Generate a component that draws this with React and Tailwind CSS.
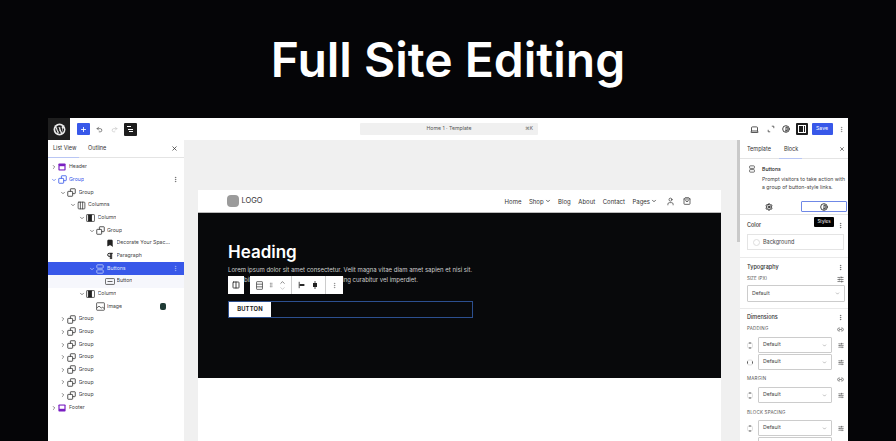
import React from 'react';
import { ChevronRight, ChevronDown, ChevronUp, MoreVertical, X, Plus, Undo2, Redo2, Laptop, Contrast, Settings, User, ShoppingBag, SlidersHorizontal, Link2, GripVertical, Bookmark, Pilcrow, Columns2, Columns3 } from 'lucide-react';

const GroupIcon = ({ className = 'text-[#333]' }) => (
  <svg viewBox="0 0 12 12" className={`w-[9px] h-[9px] shrink-0 ${className}`} fill="none" stroke="currentColor" strokeWidth="1.1">
    <rect x="4.5" y="1" width="6.5" height="6.5" rx="0.6" />
    <rect x="1" y="4.5" width="6.5" height="6.5" rx="0.6" fill="white" />
  </svg>
);

const TemplateIcon = ({ flip }) => (
  <svg viewBox="0 0 10 10" className="w-[8px] h-[8px] shrink-0">
    <rect x="0.5" y="0.5" width="9" height="9" rx="1" fill="#7a1fc2" />
    <rect x="2" y={flip ? 2 : 4} width="6" height="4" fill="#fff" />
  </svg>
);

const ColumnIcon = () => (
  <svg viewBox="0 0 12 10" className="w-[9px] h-[8px] shrink-0 text-[#222]" fill="none" stroke="currentColor" strokeWidth="1">
    <rect x="0.5" y="0.5" width="11" height="9" rx="1" />
    <rect x="3" y="1" width="4.5" height="8" fill="currentColor" />
  </svg>
);

const ImageRowIcon = () => (
  <svg viewBox="0 0 12 12" className="w-[9px] h-[9px] shrink-0 text-[#333]" fill="none" stroke="currentColor" strokeWidth="1">
    <rect x="0.8" y="1" width="10.4" height="10" rx="0.8" />
    <path d="M1 8l3-2.5 3 2.5 1.5-1 2.5 1.5" />
  </svg>
);

const ButtonsIcon = ({ className = 'text-[#a9bbf5]', size = 'w-[8px] h-[10px]' }) => (
  <svg viewBox="0 0 8 10" className={`${size} shrink-0 ${className}`} fill="none" stroke="currentColor" strokeWidth="1">
    <rect x="0.8" y="0.8" width="6.4" height="3.4" rx="0.8" />
    <rect x="0.8" y="5.8" width="6.4" height="3.4" rx="0.8" />
  </svg>
);

const ButtonIcon = () => (
  <svg viewBox="0 0 12 8" className="w-[10px] h-[7px] shrink-0 text-[#333]" fill="none" stroke="currentColor" strokeWidth="0.9">
    <rect x="0.5" y="0.5" width="11" height="7" rx="1" />
    <path d="M3 4h6" />
  </svg>
);

const listRows = [
  { label: 'Header', depth: 0, arrow: 'right', icon: <TemplateIcon /> },
  { label: 'Group', depth: 0, arrow: 'down', icon: <GroupIcon className="text-[#3858e9]" />, blue: true, menu: true },
  { label: 'Group', depth: 1, arrow: 'down', icon: <GroupIcon /> },
  { label: 'Columns', depth: 2, arrow: 'down', icon: <Columns3 className="w-[9px] h-[9px] shrink-0 text-[#333]" strokeWidth={2} /> },
  { label: 'Column', depth: 3, arrow: 'down', icon: <ColumnIcon /> },
  { label: 'Group', depth: 4, arrow: 'down', icon: <GroupIcon /> },
  { label: 'Decorate Your Spac...', depth: 5, icon: <Bookmark className="w-[8px] h-[8px] shrink-0 text-[#222] fill-[#222]" /> },
  { label: 'Paragraph', depth: 5, icon: <Pilcrow className="w-[8px] h-[8px] shrink-0 text-[#222]" strokeWidth={3} /> },
  { label: 'Buttons', depth: 4, arrow: 'down', icon: <ButtonsIcon />, selected: true, menu: true },
  { label: 'Button', depth: 5, icon: <ButtonIcon />, soft: true },
  { label: 'Column', depth: 3, arrow: 'down', icon: <ColumnIcon /> },
  { label: 'Image', depth: 4, icon: <ImageRowIcon />, thumb: true },
  { label: 'Group', depth: 1, arrow: 'right', icon: <GroupIcon /> },
  { label: 'Group', depth: 1, arrow: 'right', icon: <GroupIcon /> },
  { label: 'Group', depth: 1, arrow: 'right', icon: <GroupIcon /> },
  { label: 'Group', depth: 1, arrow: 'right', icon: <GroupIcon /> },
  { label: 'Group', depth: 1, arrow: 'right', icon: <GroupIcon /> },
  { label: 'Group', depth: 1, arrow: 'right', icon: <GroupIcon /> },
  { label: 'Group', depth: 1, arrow: 'right', icon: <GroupIcon /> },
  { label: 'Footer', depth: 0, arrow: 'right', icon: <TemplateIcon flip /> },
];

const ListRow = ({ row }) => {
  const Arrow = row.arrow === 'down' ? ChevronDown : ChevronRight;
  let rowClass = 'text-[#444]';
  if (row.selected) rowClass = 'bg-[#3858e9] text-[#dfe5fc]';
  else if (row.soft) rowClass = 'bg-[#f6f7fc] text-[#444]';
  else if (row.blue) rowClass = 'text-[#3858e9]';

  return (
    <div className={`h-[12.67px] flex items-center pr-[5px] text-[5.2px] ${rowClass}`} style={{ paddingLeft: 2.5 + row.depth * 9.5 }}>
      <span className="w-[6px] mr-[1px] shrink-0 flex justify-center">
        {row.arrow && <Arrow className="w-[6px] h-[6px]" strokeWidth={2.5} />}
      </span>
      <span className="w-[9px] flex justify-center shrink-0">{row.icon}</span>
      <span className="ml-[2.5px] truncate">{row.label}</span>
      {row.thumb && <span className="ml-auto mr-[13px] w-[6px] h-[7px] rounded-[2px] bg-[#1f3a35]" />}
      {row.menu && <MoreVertical className={`ml-auto w-[7px] h-[7px] ${row.selected ? 'text-[#a9bbf5]' : 'text-[#555]'}`} />}
    </div>
  );
};

const TopBar = () => (
  <div className="h-[22px] bg-white flex items-center shrink-0">
    <div className="w-[22px] h-[22px] bg-[#1e1e1e] flex items-center justify-center shrink-0">
      <svg viewBox="0 0 24 24" className="w-[13px] h-[13px]">
        <circle cx="12" cy="12" r="11" fill="#e8e8e8" />
        <path d="M4.2 12c0 3.1 1.8 5.8 4.4 7L4.9 8.8A7.8 7.8 0 0 0 4.2 12Zm13.1-.4c0-1-.4-1.6-.7-2.2-.4-.7-.8-1.2-.8-1.9 0-.7.6-1.4 1.3-1.4h.1A7.8 7.8 0 0 0 5.4 7.8h.5c.8 0 2.1-.1 2.1-.1.4 0 .5.6 0 .7l-.9.1 2.9 8.7 1.8-5.3-1.3-3.4-.8-.1c-.4 0-.4-.7 0-.7 0 0 1.3.1 2.1.1s2.1-.1 2.1-.1c.4 0 .5.6 0 .7l-.9.1 2.9 8.6.8-2.6c.3-1.1.6-1.9.6-2.6Zm-5.1 1.1-2.4 7a7.8 7.8 0 0 0 4.8-.1l-.1-.1-2.3-6.8Zm6.9-4.6.1.8c0 .8-.1 1.7-.6 2.8l-2.4 6.9a7.8 7.8 0 0 0 2.9-10.5Z" fill="#1e1e1e" />
      </svg>
    </div>
    <div className="ml-[7px] w-[12.5px] h-[12.5px] bg-[#3858e9] rounded-[1px] flex items-center justify-center">
      <Plus className="w-[7px] h-[7px] text-white" strokeWidth={3} />
    </div>
    <Undo2 className="ml-[6px] w-[7px] h-[7px] text-[#333]" strokeWidth={2} />
    <Redo2 className="ml-[8px] w-[7px] h-[7px] text-[#bbb]" strokeWidth={2} />
    <div className="ml-[6.5px] w-[13px] h-[13px] bg-[#1e1e1e] rounded-[1px] flex flex-col justify-center gap-[1.5px] pl-[3px]">
      <span className="block w-[4px] h-[1px] bg-white" />
      <span className="block w-[5px] h-[1px] bg-white ml-[1px]" />
      <span className="block w-[4px] h-[1px] bg-white ml-[2px]" />
    </div>
    <div className="ml-[223px] w-[178px] h-[12px] bg-[#f0f0f0] rounded-[1px] relative flex items-center justify-center text-[5.2px] text-[#555]">
      <span>Home 1 · Template</span>
      <span className="absolute right-[5px] text-[4.8px]">⌘K</span>
    </div>
    <Laptop className="ml-[212px] w-[9px] h-[9px] text-[#222]" strokeWidth={2} />
    <svg viewBox="0 0 10 10" className="ml-[7.5px] w-[8px] h-[8px] text-[#444]" fill="none" stroke="currentColor" strokeWidth="1">
      <path d="M6 1.5h2.5V4M4 8.5H1.5V6" />
    </svg>
    <Contrast className="ml-[7px] w-[8px] h-[8px] text-[#222]" strokeWidth={2.5} />
    <div className="ml-[6px] w-[12px] h-[12px] bg-[#1e1e1e] rounded-[1px] flex items-center justify-center">
      <span className="block w-[8px] h-[8px] border border-white relative">
        <span className="absolute right-[1px] top-0 bottom-0 w-[1px] bg-white" />
      </span>
    </div>
    <div className="ml-[4px] w-[21px] h-[12px] bg-[#3858e9] rounded-[1px] flex items-center justify-center text-[5.2px] text-white">Save</div>
    <MoreVertical className="ml-[5.5px] w-[7px] h-[7px] text-[#777]" />
  </div>
);

const LeftPanel = () => (
  <aside className="w-[136px] shrink-0 bg-white flex flex-col">
    <div className="h-[18px] flex items-center px-[5px] text-[5.5px] text-[#333] border-b border-[#e4e4e4] shrink-0 relative">
      <span>List View</span>
      <span className="ml-[11.5px]">Outline</span>
      <X className="ml-auto w-[7px] h-[7px] text-[#333] mr-[1px]" strokeWidth={2.5} />
      <span className="absolute left-0 bottom-[-1px] w-[31px] h-[1px] bg-[#b9c6f4]" />
    </div>
    <div className="pt-[3px]">
      {listRows.map((row, i) => <ListRow key={i} row={row} />)}
    </div>
  </aside>
);

const navItems = [
  { label: 'Home' },
  { label: 'Shop', arrow: true },
  { label: 'Blog' },
  { label: 'About' },
  { label: 'Contact' },
  { label: 'Pages', arrow: true },
];

const BlockToolbar = () => (
  <div className="absolute left-[29.5px] top-[63px] flex h-[18px] text-[#333]">
    <div className="w-[16.5px] bg-white flex items-center justify-center">
      <Columns2 className="w-[8px] h-[8px] text-[#222]" strokeWidth={2.5} />
    </div>
    <div className="ml-[6px] w-[42px] bg-white flex items-center justify-around px-[3px] border-r border-[#ccc]">
      <svg viewBox="0 0 8 10" className="w-[7px] h-[9px] shrink-0" fill="none" stroke="currentColor" strokeWidth="0.8">
        <rect x="0.6" y="0.6" width="6.8" height="8.8" rx="0.6" />
        <path d="M0.6 3.5h6.8M0.6 6.5h6.8" />
      </svg>
      <GripVertical className="w-[6px] h-[6px] text-[#888]" />
      <span className="flex flex-col">
        <ChevronUp className="w-[7px] h-[7px] -mb-[1px]" />
        <ChevronDown className="w-[7px] h-[7px] text-[#aaa]" />
      </span>
    </div>
    <div className="w-[34px] bg-white flex items-center justify-around px-[3px] border-r border-[#ccc]">
      <svg viewBox="0 0 10 10" className="w-[8px] h-[8px]">
        <path d="M1.5 1v8" stroke="#222" strokeWidth="1" />
        <rect x="2" y="3.8" width="6" height="2.4" fill="#222" />
      </svg>
      <svg viewBox="0 0 10 10" className="w-[8px] h-[8px]">
        <path d="M5 0v10" stroke="#222" strokeWidth="1" />
        <rect x="2.5" y="2.5" width="5" height="5" fill="#222" />
      </svg>
    </div>
    <div className="w-[17px] bg-white flex items-center justify-center">
      <MoreVertical className="w-[7px] h-[7px] text-[#777]" />
    </div>
  </div>
);

const Canvas = () => (
  <main className="relative flex-1 min-w-0 bg-[#f0f0f0] pt-[50px] pl-[14px] pr-[19px] overflow-hidden">
    <div className="bg-white h-[400px]">
      <div className="h-[23px] flex items-center pl-[29px] pr-[30px] text-[#333] border-b border-[#bbb]">
        <span className="w-[11.5px] h-[11.5px] rounded-[4px] bg-[#9b9b9b]" />
        <span className="ml-[3px] text-[7.5px]">LOGO</span>
        <nav className="ml-auto flex items-center gap-[7.5px] text-[6px]">
          {navItems.map(item => (
            <span key={item.label} className="flex items-center gap-[1px]">
              {item.label}
              {item.arrow && <ChevronDown className="w-[6px] h-[6px]" strokeWidth={3} />}
            </span>
          ))}
        </nav>
        <User className="ml-[8.5px] w-[9px] h-[9px]" strokeWidth={1.8} />
        <ShoppingBag className="ml-[8.5px] w-[8px] h-[8px]" strokeWidth={2.2} />
      </div>
      <section className="relative h-[165px] bg-[#08090b] pl-[30px] pt-[29px] text-white">
        <h2 className="text-[17px] leading-[20px] font-semibold">Heading</h2>
        <p className="mt-[3px] w-[246px] text-[6px] leading-[10px] text-[#cfcfcf]">
          Lorem ipsum dolor sit amet consectetur. Velit magna vitae diam amet sapien et nisi sit. Nulla bibendum tellus sit amet ut adipiscing curabitur vel imperdiet.
        </p>
        <BlockToolbar />
        <div className="mt-[16px] w-[245px] h-[17px] border border-[#2c4f8f] flex">
          <span className="w-[42px] bg-white text-[#222] text-[5.8px] font-bold flex items-center justify-center tracking-[0.2px]">BUTTON</span>
        </div>
      </section>
    </div>
    <div className="absolute right-0 top-0 w-[3px] h-[102px] bg-[#c9c9c9]" />
  </main>
);

const SectionHead = ({ title }) => (
  <div className="h-[8px] flex items-center justify-between text-[5.5px] font-medium text-[#333]">
    <span>{title}</span>
    <MoreVertical className="w-[7px] h-[7px] text-[#555]" />
  </div>
);

const SelectBox = ({ tall }) => (
  <div className={`w-full ${tall ? 'h-[17px]' : 'h-[16px]'} border border-[#ccc] rounded-[1px] flex items-center justify-between pl-[4px] pr-[4px] text-[5.2px] text-[#444]`}>
    <span>Default</span>
    <ChevronDown className="w-[5px] h-[5px] text-[#666]" />
  </div>
);

const SideIcon = ({ sides }) => (
  <svg viewBox="0 0 8 8" className="w-[6px] h-[7px] shrink-0" fill="none">
    <rect x="0.7" y="0.7" width="6.6" height="6.6" rx="2" stroke="#c4c4c4" strokeWidth="0.7" />
    <path d={sides ? 'M0.7 2.5v3M7.3 2.5v3' : 'M2.5 0.7h3M2.5 7.3h3'} stroke="#333" strokeWidth="1" />
  </svg>
);

const SideRow = ({ sides }) => (
  <div className="flex items-center">
    <SideIcon sides={sides} />
    <span className="ml-[5px] flex-1 min-w-0"><SelectBox /></span>
    <SlidersHorizontal className="ml-[6px] w-[6px] h-[7px] text-[#333] shrink-0" strokeWidth={2} />
  </div>
);

const SmallLabel = ({ children, link }) => (
  <div className="h-[8px] flex items-center justify-between text-[4.5px] tracking-[0.2px] text-[#555] uppercase">
    <span>{children}</span>
    {link && <Link2 className="w-[7px] h-[7px] text-[#444]" />}
  </div>
);

const RightPanel = () => (
  <aside className="w-[108px] shrink-0 bg-white relative flex flex-col overflow-hidden">
    <div className="h-[19px] shrink-0 flex items-center pl-[7px] pr-[3px] text-[5.5px] text-[#333] border-b border-[#e4e4e4] relative">
      <span>Template</span>
      <span className="ml-[13px]">Block</span>
      <X className="ml-auto w-[6px] h-[6px]" strokeWidth={2.5} />
      <span className="absolute left-[39px] bottom-[-1px] w-[23px] h-[1px] bg-[#b9c6f4]" />
    </div>
    <div className="h-[40px] shrink-0 pt-[6px] pl-[9px] flex gap-[7px]">
      <ButtonsIcon className="text-[#444]" size="w-[6px] h-[8px]" />
      <div className="w-[84px] text-[5.2px] leading-[8px] text-[#444]">
        <div className="font-medium text-[#222] mb-[2px]">Buttons</div>
        Prompt visitors to take action with a group of button-style links.
      </div>
    </div>
    <div className="h-[16px] shrink-0 pt-[2px] flex items-start pl-[25px] border-b border-[#e4e4e4]">
      <span className="w-[8px] h-[11px] flex items-center justify-center">
        <Settings className="w-[8px] h-[8px] text-[#222] shrink-0" strokeWidth={3} />
      </span>
      <span className="ml-[28px] w-[46px] h-[11px] rounded-[1px] border border-[#6f88e6] flex items-center justify-center">
        <Contrast className="w-[8px] h-[8px] text-[#222]" strokeWidth={2.5} />
      </span>
    </div>
    <div className="absolute left-[74px] top-[77px] w-[20px] h-[10px] bg-black rounded-[1px] text-white text-[4.5px] flex items-center justify-center">Styles</div>

    <div className="shrink-0 h-[43px] pl-[7px] pr-[4px] pt-[6px] border-b border-[#eaeaea]">
      <SectionHead title="Color" />
      <div className="mt-[5px] h-[16px] border border-[#e4e4e4] flex items-center pl-[5px] text-[5.5px] text-[#444]">
        <span className="w-[7px] h-[7px] rounded-full border border-[#ddd] mr-[3px]" />
        Background
      </div>
    </div>
    <div className="shrink-0 h-[51px] pl-[7px] pr-[3px] pt-[5px] border-b border-[#eaeaea]">
      <div className="pr-[1px]"><SectionHead title="Typography" /></div>
      <div className="mt-[4px] h-[8px] pr-[1px] flex items-center justify-between text-[4.5px] text-[#555]">
        <span>SIZE (PX)</span>
        <SlidersHorizontal className="w-[7px] h-[7px] text-[#333]" strokeWidth={2} />
      </div>
      <div className="mt-[2px]"><SelectBox tall /></div>
    </div>
    <div className="shrink-0 pl-[7px] pr-[4px] pt-[4px]">
      <SectionHead title="Dimensions" />
      <div className="mt-[4px]"><SmallLabel link>Padding</SmallLabel></div>
      <div className="mt-[4px] flex flex-col gap-[1px]">
        <SideRow />
        <SideRow sides />
      </div>
      <div className="mt-[5px]"><SmallLabel link>Margin</SmallLabel></div>
      <div className="mt-[4px]"><SideRow /></div>
      <div className="mt-[6px]"><SmallLabel>Block spacing</SmallLabel></div>
      <div className="mt-[3px] flex flex-col gap-[1px]">
        <SideRow />
        <div className="ml-[11px] mr-[12px] h-[16px] border border-[#ccc] rounded-[1px]" />
      </div>
    </div>
  </aside>
);

export default function App() {
  return (
    <div className="w-[896px] h-[441px] bg-[#050507] overflow-hidden flex flex-col items-center" style={{ fontFamily: 'Inter, "Liberation Sans", sans-serif' }}>
      <h1 className="h-[118px] shrink-0 pt-[29px] text-[48px] leading-[62px] font-semibold text-white">Full Site Editing</h1>
      <div className="w-[800px] flex-1 min-h-0 flex flex-col overflow-hidden">
        <TopBar />
        <div className="flex-1 min-h-0 flex">
          <LeftPanel />
          <Canvas />
          <RightPanel />
        </div>
      </div>
    </div>
  );
}
